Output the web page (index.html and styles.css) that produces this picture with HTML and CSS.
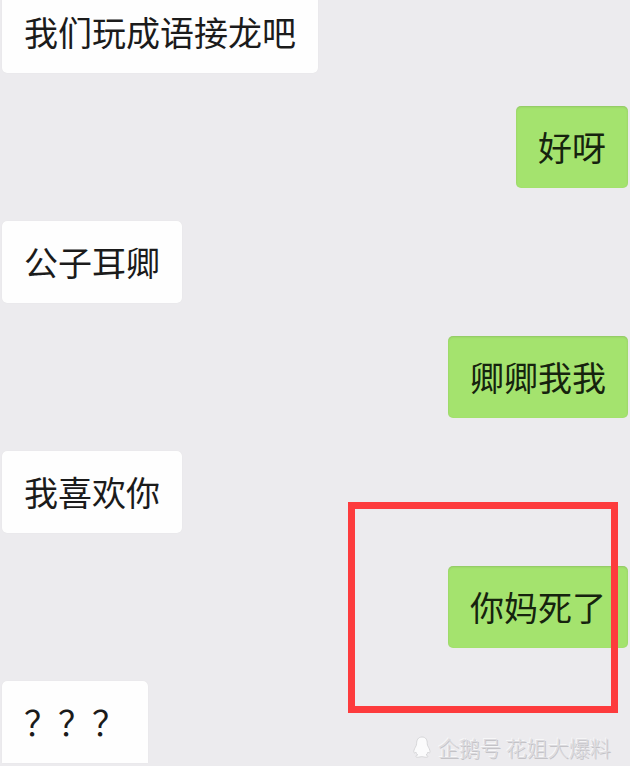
FILE: index.html
```html
<!DOCTYPE html>
<html lang="zh-CN">
<head>
    <meta charset="UTF-8">
    <meta name="viewport" content="width=device-width, initial-scale=1.0">
    <title>成语接龙</title>
    <link rel="stylesheet" href="styles.css">
</head>
<body>
    <div class="chat">
        <div class="row"><div class="bubble">我们玩成语接龙吧</div></div>
        <div class="row me"><div class="bubble">好呀</div></div>
        <div class="row"><div class="bubble">公子耳卿</div></div>
        <div class="row me"><div class="bubble">卿卿我我</div></div>
        <div class="row"><div class="bubble">我喜欢你</div></div>
        <div class="row me"><div class="bubble">你妈死了</div></div>
        <div class="row"><div class="bubble last">？？？</div></div>
    </div>

    <div class="highlight"></div>

    <div class="watermark">
        <svg class="penguin" viewBox="0 0 20 22" width="20" height="22">
            <path d="M10 1C6.2 1 4.6 4 4.6 7.4c0 1.4-.4 2.4-1.3 3.9C2.2 13.2 1.4 15.4 2 16.6c.4.6 1.2.2 1.8-.6.3 1.2 1 2.2 1.9 3-1.2.4-2 1-1.8 1.6.3.8 2.6.8 4.2.3.6-.2 1.2-.2 1.8-.2s1.2 0 1.8.2c1.6.5 3.9.5 4.2-.3.2-.6-.6-1.2-1.8-1.6.9-.8 1.6-1.8 1.9-3 .6.8 1.4 1.2 1.8.6.6-1.2-.2-3.4-1.3-5.3-.9-1.5-1.3-2.5-1.3-3.9C15.4 4 13.8 1 10 1z" fill="#fbfbfc" stroke="#cfcfd2" stroke-width="0.8"/>
        </svg>
        <span>企鹅号 花姐大爆料</span>
    </div>
</body>
</html>
```

FILE: styles.css
```css
html, body { height: 766px; overflow: hidden; }
body {
    margin: 0;
    background: #ecebee;
    font-family: "Noto Sans CJK SC", "Noto Sans", sans-serif;
    color: #1b1b1b;
    position: relative;
}
.chat { display: flex; flex-direction: column; gap: 33px; padding: 0 2px; margin-top: -9px; }
.row { display: flex; }
.row.me { justify-content: flex-end; }
.bubble {
    background: #fefefe;
    font-size: 34px;
    line-height: 42px;
    padding: 20px 22px;
    border-radius: 5px;
    box-shadow: 0 0 1px rgba(0, 0, 0, 0.08);
}
.bubble.last { border-radius: 5px 5px 0 0; }
.me .bubble {
    background: #a4e36e;
    color: #16230e;
    box-shadow: inset 0 1px 2px rgba(90, 110, 70, 0.25);
}
.highlight {
    position: absolute;
    left: 348px;
    top: 502px;
    width: 270px;
    height: 211px;
    border: 7px solid #fd3b3d;
    box-sizing: border-box;
}
.watermark {
    position: absolute;
    left: 412px;
    top: 732px;
    display: flex;
    align-items: center;
    gap: 6px;
    font-size: 21px;
    font-weight: 300;
    color: #dcdbdf;
    text-shadow: 1px 1px 0 #c4c3c7, -1px -1px 0 #f7f7f8;
}
.penguin { display: block; }
```
